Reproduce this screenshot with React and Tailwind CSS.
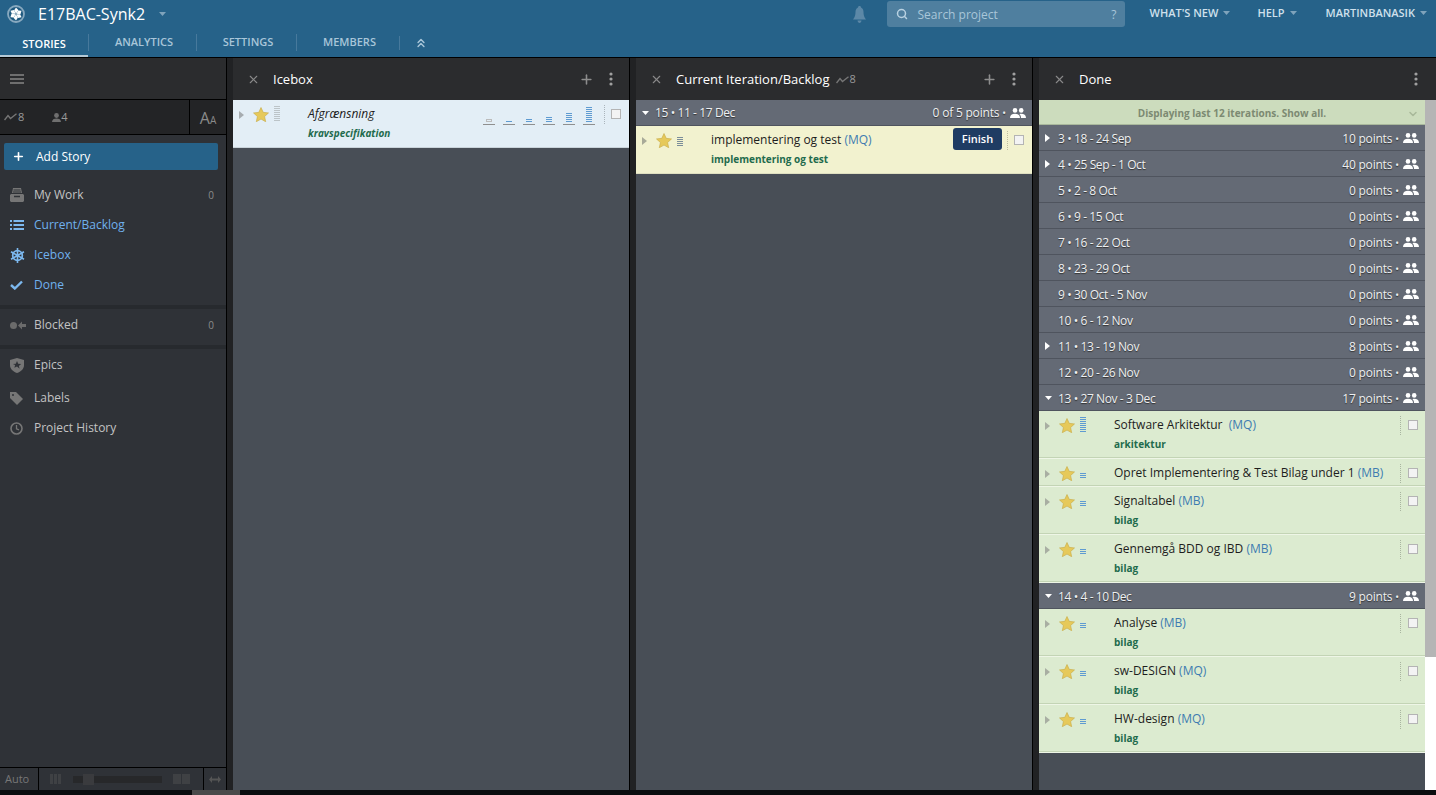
import { Search, Plus, X, ChevronsUp, ChevronDown } from 'lucide-react';

const Star = () => (
  <svg width="16" height="15" viewBox="0 0 24 23" className="shrink-0">
    <path d="M12 .8l3.4 7.4 8.1.9-6 5.5 1.7 8-7.2-4.1-7.2 4.1 1.7-8-6-5.5 8.1-.9z" fill="#e6c95a" stroke="#c9ad4a" strokeWidth="1" />
  </svg>
);

const Caret = ({ open, color = '#fff' }) => (
  open
    ? <svg width="7" height="4" viewBox="0 0 7 4" className="shrink-0"><path d="M0 0h7L3.5 4z" fill={color} /></svg>
    : <svg width="5" height="8" viewBox="0 0 5 8" className="shrink-0"><path d="M0 0l5 4-5 4z" fill={color} /></svg>
);

const Lines = ({ count, color = 'bg-[#5f9bd1]', w = 'w-[6px]' }) => (
  <div className={`flex flex-col gap-[1px] shrink-0 ${w}`}>
    {Array.from({ length: count }).map((_, i) => (
      <div key={i} className={`h-[1px] w-full ${color}`} />
    ))}
  </div>
);

const Box = () => <div className="w-[10px] h-[10px] bg-[#f3f3f3] border border-[#b4b4b4] shrink-0" />;

const Kebab = () => (
  <svg width="4" height="14" viewBox="0 0 4 14" className="shrink-0">
    <circle cx="2" cy="2" r="1.6" fill="#a0a0a0" />
    <circle cx="2" cy="7" r="1.6" fill="#a0a0a0" />
    <circle cx="2" cy="12" r="1.6" fill="#a0a0a0" />
  </svg>
);

const Wave = ({ color = '#767676' }) => (
  <svg width="13" height="8" viewBox="0 0 13 8" className="shrink-0">
    <path d="M.5 7L4 2.5l2.5 3L12.5.8" fill="none" stroke={color} strokeWidth="1.4" />
  </svg>
);

const People = () => (
  <svg width="16" height="10" viewBox="0 0 16 10" className="shrink-0">
    <circle cx="5" cy="2.4" r="2.3" fill="#fff" />
    <circle cx="11.2" cy="2.4" r="2.3" fill="#fff" />
    <path d="M0 10c0-3 2-4.2 5-4.2S10 7 10 10z" fill="#fff" />
    <path d="M11 10c0-1.800-.5-3-1.500-3.800.5-.3 1.100-.4 1.700-.4 2.800 0 4.800 1.200 4.800 4.200z" fill="#fff" />
  </svg>
);

const TrayIcon = () => (
  <svg width="14" height="14" viewBox="0 0 14 14">
    <path d="M3 0h8l1 5H2z" fill="#767676" />
    <path d="M3.500 2h7M3 4h8" stroke="#2f3237" strokeWidth="1" />
    <path d="M0 7l1-1h12l1 1v6l-1 1H1l-1-1z" fill="#767676" />
    <path d="M4 8.500h6" stroke="#2f3237" strokeWidth="1.500" />
  </svg>
);

const ListIcon = () => (
  <svg width="14" height="10" viewBox="0 0 14 10">
    <path d="M0 1h2M3.500 1H14M0 5h2M3.500 5H14M0 9h2M3.500 9H14" stroke="#7cb8ee" strokeWidth="1.800" />
  </svg>
);

const FlakeIcon = () => (
  <svg width="15" height="15" viewBox="0 0 15 15">
    <circle cx="7.500" cy="7.500" r="4.800" fill="none" stroke="#7cb8ee" strokeWidth="1.800" />
    <path d="M7.500 0v15M1 3.700l13 7.600M14 3.700L1 11.300" stroke="#7cb8ee" strokeWidth="1.600" />
  </svg>
);

const CheckIcon = () => (
  <svg width="13" height="10" viewBox="0 0 13 10">
    <path d="M1 5l3.800 3.500L12 1.500" fill="none" stroke="#7cb8ee" strokeWidth="2.400" />
  </svg>
);

const BlockedIcon = () => (
  <svg width="16" height="9" viewBox="0 0 16 9">
    <circle cx="3.500" cy="4.500" r="3.500" fill="#6b6b6b" />
    <path d="M8 4.500L12 .5V3h4v3h-4v2.500z" fill="#6b6b6b" />
  </svg>
);

const ShieldIcon = () => (
  <svg width="14" height="15" viewBox="0 0 14 15">
    <path d="M7 0l7 2v5c0 4-3 6.500-7 8-4-1.500-7-4-7-8V2z" fill="#767676" />
    <path d="M7 3l1.200 2.700 2.900.3-2.200 1.900.7 2.900L7 8.400l-2.600 1.400.7-2.900L2.900 6l2.900-.3z" fill="#2f3237" />
  </svg>
);

const TagIcon = () => (
  <svg width="13" height="13" viewBox="0 0 13 13">
    <path d="M0 0h6l7 7-6 6-7-7z" fill="#767676" />
    <circle cx="3" cy="3" r="1" fill="#2f3237" />
  </svg>
);

const ClockIcon = () => (
  <svg width="13" height="13" viewBox="0 0 13 13">
    <circle cx="6.500" cy="6.500" r="5.500" fill="none" stroke="#767676" strokeWidth="1.600" />
    <path d="M6.500 3v3.800l2.500 1" fill="none" stroke="#767676" strokeWidth="1.300" />
  </svg>
);

const petal = 'M9 2.600l2.500 2.700L9 8.700 7.200 5.300z';

const Logo = () => (
  <svg width="18" height="18" viewBox="0 0 18 18" className="shrink-0">
    <circle cx="9" cy="9" r="8" fill="#1f5a80" stroke="#88a9bf" strokeWidth="1.800" />
    <g fill="#fff">
      {[0, 60, 120, 180, 240, 300].map((deg) => (
        <path key={deg} d={petal} transform={`rotate(${deg} 9 9)`} />
      ))}
    </g>
  </svg>
);

const BellIcon = () => (
  <svg width="13" height="17" viewBox="0 0 13 17" className="shrink-0">
    <path d="M6.500 0C7.500 0 8 .7 8 1.600c1.700.8 2.500 2.400 2.500 4.400 0 3 .6 5 2.500 7.500H0C1.900 11 2.500 9 2.500 6c0-2 .8-3.600 2.500-4.400C5 .7 5.500 0 6.500 0z" fill="#5c88a7" />
    <path d="M4.500 14.500h4C8.300 16 7.500 17 6.500 17s-1.800-1-2-2.500z" fill="#5c88a7" />
  </svg>
);

const NavItem = ({ icon, label, count, active, className = '' }) => (
  <div className={`h-[30px] pt-[2px] flex items-center pl-[10px] pr-[12px] text-[12px] shrink-0 ${className} ${active ? 'text-[#6fb1ee]' : 'text-[#c3c3c3]'}`}>
    <div className="w-[24px] flex items-center">{icon}</div>
    <span className="flex-1">{label}</span>
    {count !== undefined && <span className="text-[10px] text-[#8b8b8b]">{count}</span>}
  </div>
);

const Gutter = () => <div className="w-[7px] bg-[#212224] border-l border-black shrink-0" />;

const PanelHead = ({ title, extra, plus, right = 'pr-[16px]' }) => (
  <div className={`h-[42px] bg-[#2b2c2e] flex items-center pl-[14px] shrink-0 ${right}`}>
    <X size={13} className="text-[#8a8a8a]" strokeWidth={2} />
    <span className="ml-[13px] mt-[1px] text-[13px] text-white">{title}</span>
    {extra}
    <div className="flex-1" />
    {plus && <Plus size={15} strokeWidth={2.5} className="text-[#8d8d8d] mr-[15px]" />}
    <Kebab />
  </div>
);

const IterRow = ({ label, points, caret, open, textShift = '' }) => (
  <div className="h-[26px] pt-[1px] bg-[#646a75] border-b border-[#4f545e] flex items-center pl-[6px] pr-[6px] text-[12px] text-[#eef0f2] [text-shadow:0_1px_1px_#333] shrink-0">
    <div className="w-[13px] flex items-center">{caret && <Caret open={open} />}</div>
    <span className={`tracking-[-0.4px] ${textShift}`}>{label}</span>
    <div className="flex-1" />
    <span className={`tracking-[-0.2px] ${textShift}`}>{points}</span>
    <span className={`ml-[3px] text-[10px] ${textShift}`}>•</span>
    <div className="ml-[4px]"><People /></div>
  </div>
);

// shared left part of a story: caret, star, estimate bars
const StoryLead = ({ lines, barsTop, caretColor, barColor }) => (
  <>
    <div className="mt-[11px] w-[6px]"><Caret color={caretColor} /></div>
    <div className="mt-[7px] ml-[8px]"><Star /></div>
    <div className={`ml-[5px] ${barsTop}`}><Lines count={lines} color={barColor} /></div>
  </>
);

const Story = ({ title, who, label, lines = 3 }) => (
  <div className={`${label ? 'h-[48px]' : 'h-[28px]'} bg-[#dcebd0] border-b border-[#eef6e6] shadow-[inset_0_-1px_0_#c3d4b5] flex pl-[6px] pr-[7px] shrink-0`}>
    <StoryLead lines={lines} barsTop={lines > 3 ? 'mt-[6px]' : 'mt-[14px]'} caretColor="#a8aea2" barColor="bg-[#5f9bd1]" />
    <div className="ml-[28px] flex-1 text-[12px] text-[#1d1d1d]">
      <div className="mt-[5px] leading-[18px] whitespace-pre">{title} <span className="text-[#3e7cb1]">({who})</span></div>
      {label && <div className="mt-[3px] text-[10px] font-bold text-[#1f6b4d] leading-[14px]">{label}</div>}
    </div>
    <div className="border-l border-dotted border-[#a9b5a0] h-[19px] mt-[5px]" />
    <div className="ml-[7px] mt-[9px]"><Box /></div>
  </div>
);

const doneRows = [
  ['3 • 18 - 24 Sep', '10 points', true],
  ['4 • 25 Sep - 1 Oct', '40 points', true],
  ['5 • 2 - 8 Oct', '0 points'],
  ['6 • 9 - 15 Oct', '0 points'],
  ['7 • 16 - 22 Oct', '0 points'],
  ['8 • 23 - 29 Oct', '0 points'],
  ['9 • 30 Oct - 5 Nov', '0 points'],
  ['10 • 6 - 12 Nov', '0 points'],
  ['11 • 13 - 19 Nov', '8 points', true],
  ['12 • 20 - 26 Nov', '0 points'],
];

const estimates = [0, 1, 2, 3, 5, 8];

const HeadLink = ({ label, className }) => (
  <>
    <span className={`${className} mb-[2px] text-[11px] font-semibold text-[#cfe0ec]`}>{label}</span>
    <div className="ml-[5px] mb-[2px]"><Caret open color="#7fa3bb" /></div>
  </>
);

export default function App() {
  return (
    <div className="h-[795px] w-[1436px] overflow-hidden bg-black flex flex-col font-['Open_Sans',sans-serif]">
      {/* top bar */}
      <header className="h-[57px] bg-[#266289] shrink-0 flex flex-col">
        <div className="h-[28px] flex items-center pl-[7px] pr-[9px]">
          <Logo />
          <span className="ml-[13px] text-[16px] text-white">E17BAC-Synk2</span>
          <div className="ml-[14px]"><Caret open color="#7fa3bb" /></div>
          <div className="flex-1" />
          <BellIcon />
          <div className="ml-[21px] w-[238px] h-[26px] bg-[#4f7f9f] rounded-[3px] flex items-center pl-[9px] pr-[9px] text-[12px] text-[#a9c6d9]">
            <Search size={12} strokeWidth={3} className="text-[#b9d2e2]" />
            <span className="ml-[9px] flex-1 pt-[2px]">Search project</span>
            <span className="pt-[2px]">?</span>
          </div>
          <HeadLink label="WHAT'S NEW" className="ml-[24px]" />
          <HeadLink label="HELP" className="ml-[27px]" />
          <HeadLink label="MARTINBANASIK" className="ml-[29px]" />
        </div>
        <nav className="flex-1 flex items-center text-[11px] font-semibold text-[#a9c6d9]">
          <div className="w-[88px] h-full flex items-center justify-center text-white border-b-2 border-[#b5c9d6] pt-[5px]">STORIES</div>
          <div className="w-[108px] pl-[3px] flex justify-center border-l border-[#47799c]">ANALYTICS</div>
          <div className="w-[100px] pl-[3px] flex justify-center border-l border-[#47799c]">SETTINGS</div>
          <div className="w-[103px] pl-[3px] flex justify-center border-l border-[#47799c]">MEMBERS</div>
          <div className="w-[46px] pr-[3px] flex justify-center border-l border-[#47799c]"><ChevronsUp size={14} strokeWidth={2.5} /></div>
        </nav>
      </header>

      <div className="flex-1 flex min-h-0 mt-[1px]">
        {/* sidebar */}
        <aside className="w-[226px] bg-[#2f3237] flex flex-col shrink-0">
          <div className="h-[42px] bg-[#2b2c2e] border-b border-black flex flex-col justify-center gap-[2px] pl-[10px] shrink-0">
            <div className="w-[14px] h-[2px] bg-[#6f6f6f]" />
            <div className="w-[14px] h-[2px] bg-[#6f6f6f]" />
            <div className="w-[14px] h-[2px] bg-[#6f6f6f]" />
          </div>
          <div className="h-[35px] bg-[#232426] border-b border-black flex items-center text-[11px] text-[#9a9a9a] shrink-0">
            <div className="ml-[4px]"><Wave /></div>
            <span className="ml-[1px]">8</span>
            <svg width="9" height="9" viewBox="0 0 9 9" className="ml-[28px]">
              <circle cx="4.500" cy="2.500" r="2.400" fill="#6f6f6f" />
              <path d="M0 9c0-2.500 2-3.500 4.500-3.500S9 6.500 9 9z" fill="#6f6f6f" />
            </svg>
            <span>4</span>
            <div className="flex-1" />
            <div className="w-[37px] h-full border-l border-black flex items-end justify-center pb-[7px] text-[#8a8a8a]">
              <span className="text-[16px] leading-[18px]">A</span><span className="text-[10px] leading-[14px]">A</span>
            </div>
          </div>
          <div className="ml-[4px] mr-[8px] mt-[8px] mb-[9px] h-[27px] bg-[#266289] rounded-[2px] flex items-center pl-[8px] text-[12px] text-white shrink-0">
            <Plus size={13} strokeWidth={3} />
            <span className="ml-[11px] pt-[1px]">Add Story</span>
          </div>
          <NavItem icon={<TrayIcon />} label="My Work" count={0} />
          <NavItem icon={<ListIcon />} label="Current/Backlog" active />
          <NavItem icon={<FlakeIcon />} label="Icebox" active />
          <NavItem icon={<CheckIcon />} label="Done" active />
          <div className="h-[4px] bg-[#272a2e] mt-[6px] shrink-0" />
          <NavItem icon={<BlockedIcon />} label="Blocked" count={0} className="mb-[6px]" />
          <div className="h-[4px] bg-[#272a2e] shrink-0" />
          <NavItem icon={<ShieldIcon />} label="Epics" />
          <NavItem icon={<TagIcon />} label="Labels" className="mt-[3px]" />
          <NavItem icon={<ClockIcon />} label="Project History" />
          <div className="flex-1" />
          <div className="h-[23px] bg-[#2f3237] border-t border-black flex items-center text-[11px] text-[#777] shrink-0">
            <div className="w-[39px] pl-[5px] h-full flex items-center border-r border-black">Auto</div>
            <div className="flex-1 flex items-center pl-[11px] pr-[13px]">
              <div className="flex gap-[1px]">
                <div className="w-[3px] h-[10px] bg-[#3f4144]" />
                <div className="w-[3px] h-[10px] bg-[#3f4144]" />
                <div className="w-[3px] h-[10px] bg-[#3f4144]" />
              </div>
              <div className="flex-1 h-[7px] bg-[#27282a] ml-[12px] mr-[11px] relative">
                <div className="absolute left-[10px] top-[-2px] w-[11px] h-[11px] bg-[#3a3b3e]" />
              </div>
              <div className="flex gap-[1px]">
                <div className="w-[8px] h-[10px] bg-[#3f4144]" />
                <div className="w-[8px] h-[10px] bg-[#3f4144]" />
              </div>
            </div>
            <div className="w-[23px] h-full flex items-center justify-center border-l border-black">
              <svg width="12" height="7" viewBox="0 0 12 7">
                <path d="M0 3.500L3 0v2.500h6V0l3 3.500L9 7V4.500H3V7z" fill="#555" />
              </svg>
            </div>
          </div>
        </aside>

        <Gutter />

        {/* icebox */}
        <section className="w-[396px] flex flex-col bg-[#484e56] shrink-0">
          <PanelHead title="Icebox" plus />
          <div className="h-[48px] bg-[#e3eef6] border-b border-[#c9d3da] flex pl-[6px] pr-[8px] shrink-0">
            <StoryLead lines={8} barsTop="mt-[6px]" caretColor="#a6acb0" barColor="bg-[#bcc4c8]" />
            <div className="ml-[28px] flex-1 italic">
              <div className="mt-[5px] text-[12px] leading-[18px] text-[#1d1d1d]">Afgrænsning</div>
              <div className="mt-[3px] text-[10px] leading-[14px] font-bold text-[#1f6b4d]">kravspecifikation</div>
            </div>
            <div className="flex gap-[8px] mt-[5px] mr-[9px] items-start">
              {estimates.map((n) => (
                <div key={n} className="w-[12px] h-[20px] flex flex-col justify-end items-center border-b border-[#8f8f8f] pb-[2px]">
                  {n === 0
                    ? <div className="w-[6px] h-[3px] border border-[#bcbcbc]" />
                    : <Lines count={n} />}
                </div>
              ))}
            </div>
            <div className="border-l border-dotted border-[#aab4bb] h-[19px] mt-[5px]" />
            <div className="ml-[6px] mt-[9px]"><Box /></div>
          </div>
        </section>

        <Gutter />

        {/* backlog */}
        <section className="w-[396px] flex flex-col bg-[#484e56] shrink-0">
          <PanelHead title="Current Iteration/Backlog" plus extra={
            <span className="flex items-center ml-[6px] mt-[1px] text-[11px] text-[#9a9a9a]"><Wave /><span className="ml-[1px]">8</span></span>
          } />
          <IterRow label="15 • 11 - 17 Dec" points="0 of 5 points" caret open />
          <div className="h-[48px] bg-[#f2f2cf] border-b border-[#dfdfc0] flex pl-[6px] pr-[8px] shrink-0">
            <StoryLead lines={5} barsTop="mt-[11px]" caretColor="#a8aa98" barColor="bg-[#7b8d99]" />
            <div className="ml-[28px] flex-1 text-[12px] text-[#1d1d1d]">
              <div className="mt-[5px] leading-[18px]">implementering og test <span className="text-[#3e7cb1]">(MQ)</span></div>
              <div className="mt-[3px] text-[10px] font-bold text-[#1f6b4d] leading-[14px]">implementering og test</div>
            </div>
            <div className="mt-[2px] w-[49px] h-[22px] bg-[#1f3c63] rounded-[3px] text-white text-[11px] font-semibold flex items-center justify-center">Finish</div>
            <div className="ml-[5px] border-l border-dotted border-[#bdbda0] h-[19px] mt-[5px]" />
            <div className="ml-[6px] mt-[9px]"><Box /></div>
          </div>
        </section>

        <Gutter />

        {/* done */}
        <section className="flex-1 flex flex-col bg-[#484e56] min-w-0">
          <PanelHead title="Done" right="pr-[18px]" />
          <div className="flex-1 flex min-h-0">
            <div className="flex-1 flex flex-col min-w-0">
              <div className="h-[25px] pt-[1px] bg-[#ccdcbd] border-b border-[#a9b89c] flex items-center justify-center text-[10px] font-bold text-[#7c8a72] relative shrink-0">
                <span className="mt-[2px]">Displaying last 12 iterations. Show all.</span>
                <ChevronDown size={12} strokeWidth={3} className="absolute right-[6px] top-[8px] text-[#a8b89a]" />
              </div>
              {doneRows.map(([label, points, caret]) => <IterRow key={label} label={label} points={points} caret={caret} textShift="mt-[2px]" />)}
              <IterRow label="13 • 27 Nov - 3 Dec" points="17 points" caret open textShift="mt-[2px]" />
              <Story title="Software Arkitektur " who="MQ" label="arkitektur" lines={8} />
              <Story title="Opret Implementering & Test Bilag under 1" who="MB" />
              <Story title="Signaltabel" who="MB" label="bilag" />
              <Story title="Gennemgå BDD og IBD" who="MB" label="bilag" />
              <IterRow label="14 • 4 - 10 Dec" points="9 points" caret open textShift="mt-[2px]" />
              <Story title="Analyse" who="MB" label="bilag" />
              <Story title="sw-DESIGN" who="MQ" label="bilag" />
              <Story title="HW-design" who="MQ" label="bilag" />
            </div>
            <div className="w-[11px] bg-white shrink-0 flex flex-col">
              <div className="h-[557px] bg-[#b5b5b5]" />
            </div>
          </div>
        </section>
      </div>
      <div className="h-[5px] bg-[#0a0c0e] shrink-0 flex">
        <div className="ml-[192px] w-[48px] bg-[#4a4a4a]" />
      </div>
    </div>
  );
}
